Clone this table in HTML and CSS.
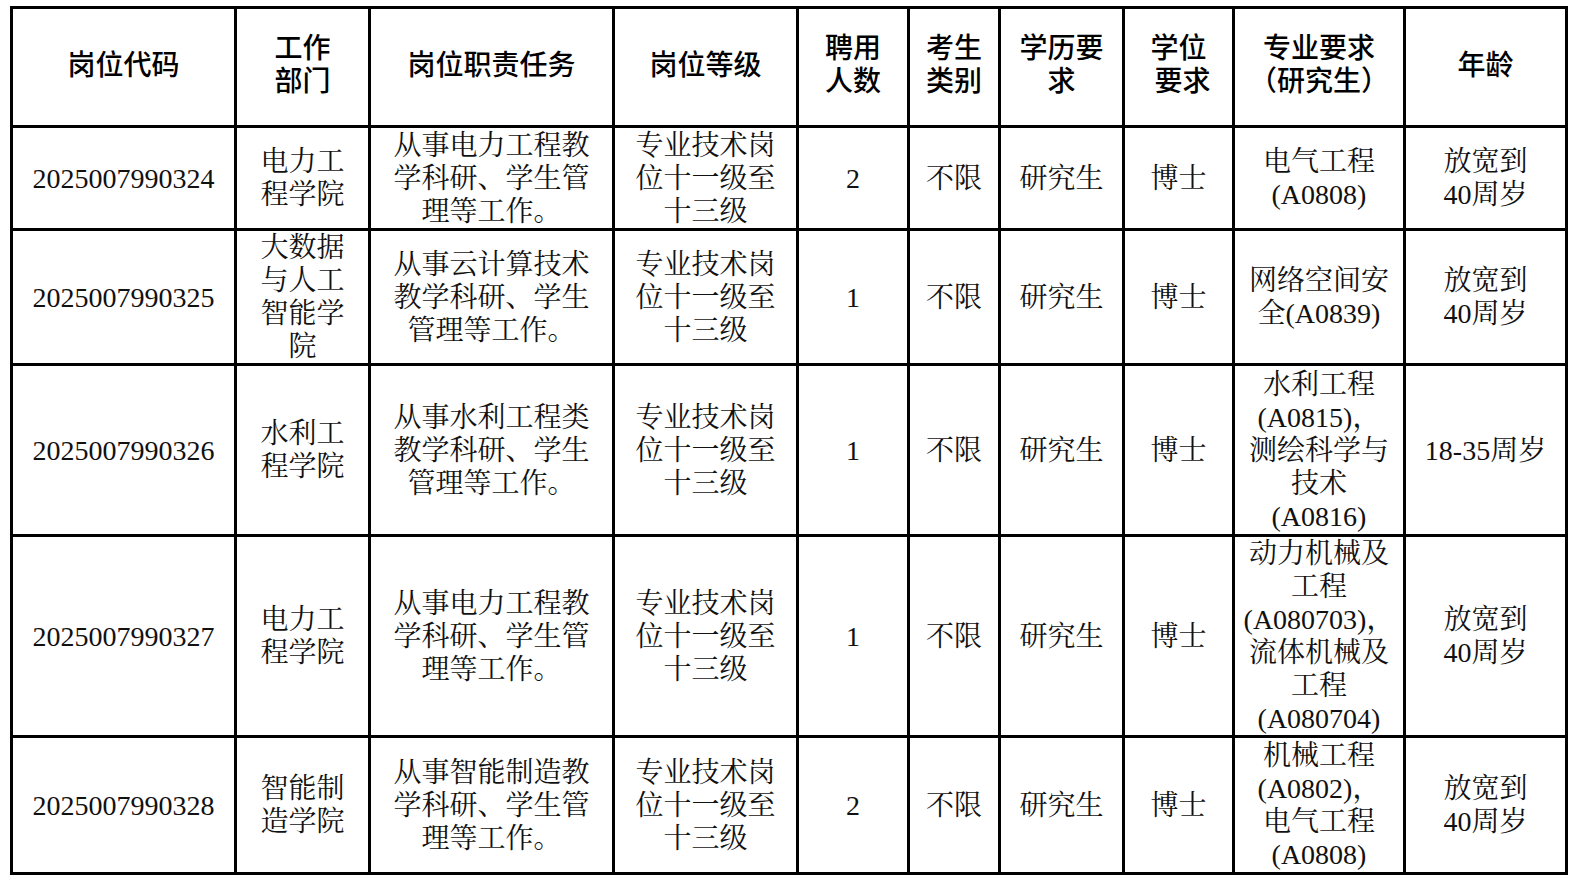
FILE: index.html
```html
<!DOCTYPE html>
<html lang="zh-CN">
<head>
<meta charset="utf-8">
<title>岗位表</title>
<link rel="stylesheet" href="styles.css">
</head>
<body>
<div class="sheet" role="table">
  <div class="cell head">岗位代码</div>
  <div class="cell head">工作<br>部门</div>
  <div class="cell head">岗位职责任务</div>
  <div class="cell head">岗位等级</div>
  <div class="cell head">聘用<br>人数</div>
  <div class="cell head">考生<br>类别</div>
  <div class="cell head">学历要<br>求</div>
  <div class="cell head">学位<br>&nbsp;要求</div>
  <div class="cell head">专业要求<br>（研究生）</div>
  <div class="cell head">年龄</div>

  <div class="cell">2025007990324</div>
  <div class="cell">电力工<br>程学院</div>
  <div class="cell">从事电力工程教<br>学科研、学生管<br>理等工作。</div>
  <div class="cell">专业技术岗<br>位十一级至<br>十三级</div>
  <div class="cell">2</div>
  <div class="cell">不限</div>
  <div class="cell">研究生</div>
  <div class="cell">博士</div>
  <div class="cell">电气工程<br>(A0808)</div>
  <div class="cell">放宽到<br>40周岁</div>

  <div class="cell">2025007990325</div>
  <div class="cell">大数据<br>与人工<br>智能学<br>院</div>
  <div class="cell">从事云计算技术<br>教学科研、学生<br>管理等工作。</div>
  <div class="cell">专业技术岗<br>位十一级至<br>十三级</div>
  <div class="cell">1</div>
  <div class="cell">不限</div>
  <div class="cell">研究生</div>
  <div class="cell">博士</div>
  <div class="cell">网络空间安<br>全(A0839)</div>
  <div class="cell">放宽到<br>40周岁</div>

  <div class="cell">2025007990326</div>
  <div class="cell">水利工<br>程学院</div>
  <div class="cell">从事水利工程类<br>教学科研、学生<br>管理等工作。</div>
  <div class="cell">专业技术岗<br>位十一级至<br>十三级</div>
  <div class="cell">1</div>
  <div class="cell">不限</div>
  <div class="cell">研究生</div>
  <div class="cell">博士</div>
  <div class="cell">水利工程<br>(A0815)，<br>测绘科学与<br>技术<br>(A0816)</div>
  <div class="cell">18-35周岁</div>

  <div class="cell">2025007990327</div>
  <div class="cell">电力工<br>程学院</div>
  <div class="cell">从事电力工程教<br>学科研、学生管<br>理等工作。</div>
  <div class="cell">专业技术岗<br>位十一级至<br>十三级</div>
  <div class="cell">1</div>
  <div class="cell">不限</div>
  <div class="cell">研究生</div>
  <div class="cell">博士</div>
  <div class="cell">动力机械及<br>工程<br>(A080703)，<br>流体机械及<br>工程<br>(A080704)</div>
  <div class="cell">放宽到<br>40周岁</div>

  <div class="cell">2025007990328</div>
  <div class="cell">智能制<br>造学院</div>
  <div class="cell">从事智能制造教<br>学科研、学生管<br>理等工作。</div>
  <div class="cell">专业技术岗<br>位十一级至<br>十三级</div>
  <div class="cell">2</div>
  <div class="cell">不限</div>
  <div class="cell">研究生</div>
  <div class="cell">博士</div>
  <div class="cell">机械工程<br>(A0802)，<br>电气工程<br>(A0808)</div>
  <div class="cell">放宽到<br>40周岁</div>
</div>
</body>
</html>
```

FILE: styles.css
```css
html, body {
  margin: 0;
  background: #fff;
}
body {
  padding: 6px 0 0 10px;
  font-family: "Liberation Serif", "Noto Serif CJK SC", "Noto Sans CJK SC", serif;
  color: #111;
}
.sheet {
  display: grid;
  grid-template-columns: 221px 131px 241px 181px 108px 88px 121px 107px 168px 159px;
  grid-template-rows: 116px 100px 132px 168px 198px 134px;
  gap: 3px;
  padding: 3px;
  background: #000;
  width: max-content;
}
.cell {
  background: #fff;
  display: flex;
  align-items: center;
  justify-content: center;
  text-align: center;
  font-size: 28px;
  line-height: 33px;
  white-space: nowrap;
}
.head {
  font-family: "Liberation Sans", "Noto Sans CJK SC", sans-serif;
  font-weight: 500;
  color: #000;
  padding-bottom: 4px;
}
```
